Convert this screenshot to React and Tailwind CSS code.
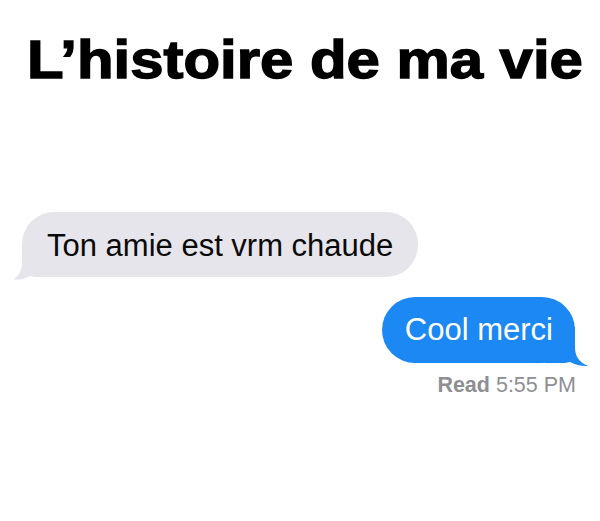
import React from "react";

export default function App() {
  return (
    <div className="w-[600px] h-[521px] bg-white flex flex-col font-['Liberation_Sans',Arial,sans-serif]">
      <div className="pt-[33px] pl-[9px] flex justify-center">
        <h1 className="text-[53px] leading-[53px] font-bold text-black scale-x-[1.13] whitespace-nowrap [-webkit-text-stroke:1.4px_#000]">
          L’histoire de ma vie
        </h1>
      </div>

      <div className="mt-[126px] ml-[22px] flex">
        <div className="relative bg-[#E6E5EB] rounded-[32px] pl-[25px] pr-[25px] pt-[16px] pb-[13px]">
          <svg
            className="absolute left-0 top-0 overflow-visible"
            width="40"
            height="70"
            viewBox="0 0 40 70"
          >
            <path
              d="M0 30 L0 50 C0 58 -3 64 -9 67.5 C-3 68 3 67 8 64 C11 65 14 65 18 65 L30 65 L30 30 Z"
              fill="#E6E5EB"
            />
          </svg>
          <span className="relative block text-[31px] leading-[36px] text-[#0a0a0a] whitespace-nowrap">
            Ton amie est vrm chaude
          </span>
        </div>
      </div>

      <div className="mt-[20px] mr-[25px] flex justify-end">
        <div className="relative bg-[#1B88F4] rounded-[33px] pl-[23px] pr-[22px] pt-[15px] pb-[15px]">
          <svg
            className="absolute right-0 top-0 overflow-visible"
            width="40"
            height="70"
            viewBox="0 0 40 70"
          >
            <path
              d="M40 30 L40 50 C40 58 43 65 53 69 C47 69.5 41 68 35 65 C32 66 28 66 25 66 L10 66 L10 30 Z"
              fill="#1B88F4"
            />
          </svg>
          <span className="relative block text-[31px] leading-[36px] text-white whitespace-nowrap">
            Cool merci
          </span>
        </div>
      </div>

      <div className="mt-[10px] mr-[24px] flex justify-end">
        <span className="text-[21.5px] leading-[24px] text-[#8E8E93] whitespace-nowrap">
          <span className="font-bold">Read</span> 5:55 PM
        </span>
      </div>
    </div>
  );
}
